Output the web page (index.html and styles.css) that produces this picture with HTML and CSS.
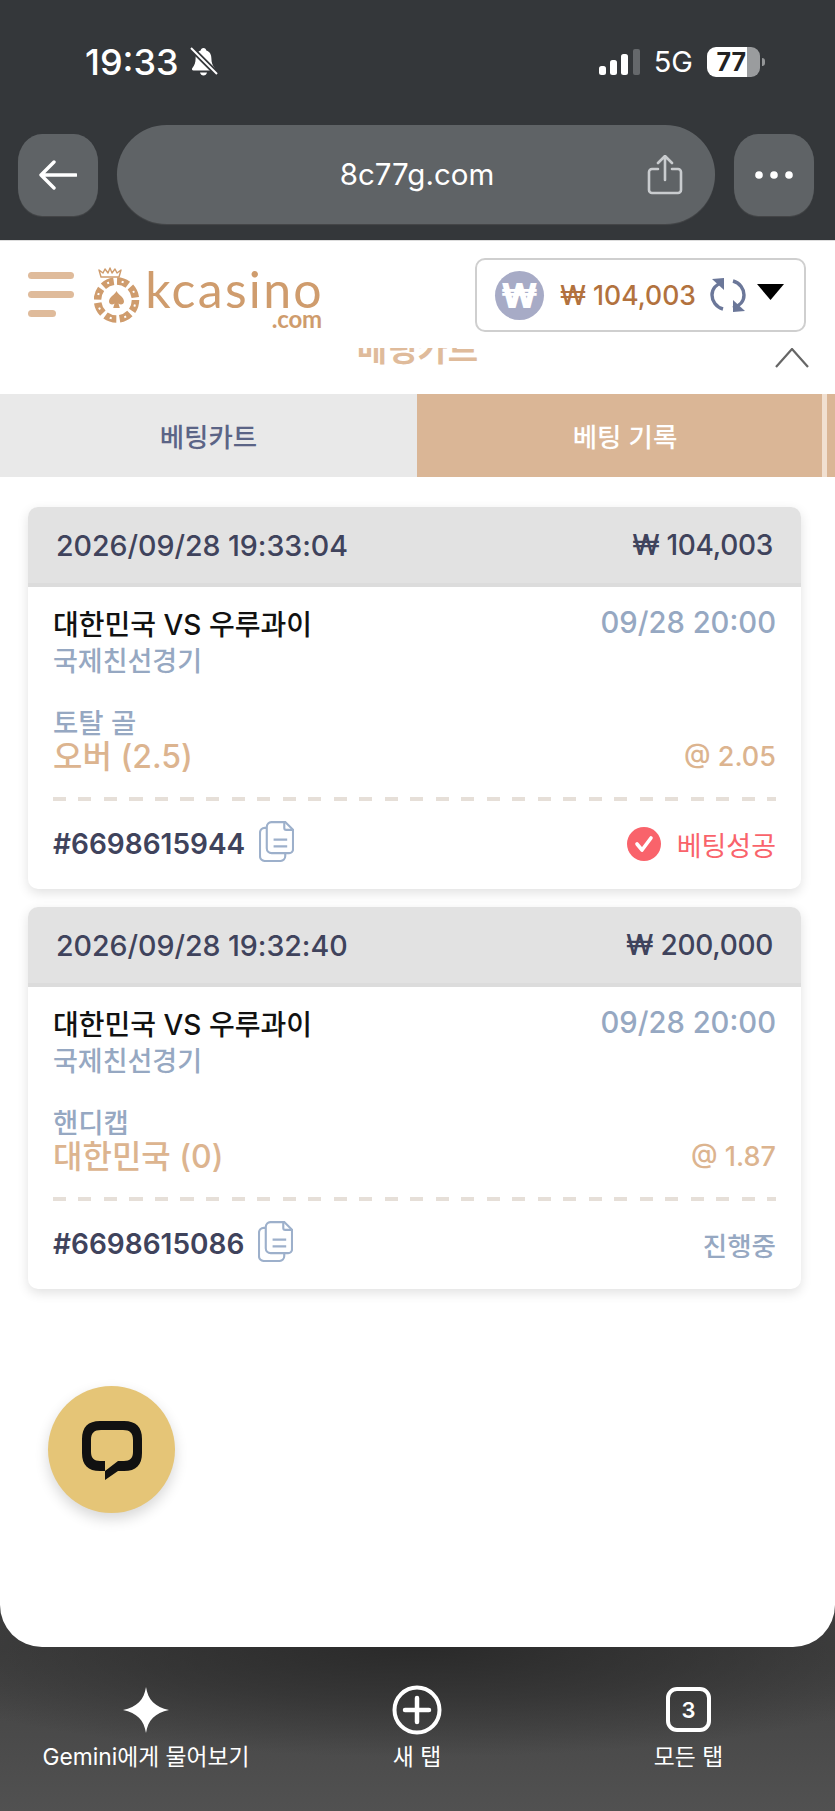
FILE: index.html
```html
<!DOCTYPE html>
<html lang="ko">
<head>
<meta charset="utf-8">
<title>kcasino</title>
<link rel="stylesheet" href="styles.css">
</head>
<body>
<div class="app">
  <div class="chrome">
    <div class="status">
      <div class="status-left">
        <span class="time">19:33</span>
        <svg class="bell" viewBox="0 0 29 30"><path d="M14.500 1c-1.600 0-2.600 1-2.800 2.400C8 4.600 6.600 7.600 6.600 11.500c0 4-1 6.500-3.400 9.700-.6.900-.1 2.300 1.200 2.300h20.200c1.300 0 1.800-1.400 1.200-2.300-2.400-3.200-3.400-5.700-3.400-9.700 0-3.900-1.400-6.900-5.100-8.100C17.100 2 16.100 1 14.500 1z" fill="#fff"/><path d="M11 25.500h7c-.4 2-1.800 3-3.500 3s-3.100-1-3.500-3z" fill="#fff"/><path d="M2 1l26 26" stroke="#34373a" stroke-width="5.500"/><path d="M2 1l26 26" stroke="#fff" stroke-width="2"/></svg>
      </div>
      <div class="status-right">
        <svg class="signal" viewBox="0 0 41 26"><rect x="0" y="17" width="7" height="9" rx="2.500" fill="#fff"/><rect x="11" y="11" width="7" height="15" rx="2.500" fill="#fff"/><rect x="22" y="5" width="7" height="21" rx="2.500" fill="#fff"/><rect x="34" y="0" width="7" height="26" rx="2" fill="#65686b"/></svg>
        <span class="net">5G</span>
        <span class="battery"><span class="battery-num">77</span></span>
        <span class="battery-nub"></span>
      </div>
    </div>
    <div class="nav">
      <div class="nav-btn">
        <svg class="back" viewBox="0 0 38 30"><path d="M37 15H3M15 2L2 15l13 13" fill="none" stroke="#fff" stroke-width="3.400" stroke-linecap="round" stroke-linejoin="round"/></svg>
      </div>
      <div class="url">
        <span class="url-text">8c77g.com</span>
        <svg class="share" viewBox="0 0 36 40"><path d="M11 14H5a3 3 0 0 0-3 3v18a3 3 0 0 0 3 3h26a3 3 0 0 0 3-3V17a3 3 0 0 0-3-3h-6" fill="none" stroke="#c9cccf" stroke-width="2.600" stroke-linecap="round"/><path d="M18 25V2M11 8l7-7 7 7" fill="none" stroke="#c9cccf" stroke-width="2.600" stroke-linecap="round" stroke-linejoin="round"/></svg>
      </div>
      <div class="nav-btn">
        <svg class="dots" viewBox="0 0 38 8"><circle cx="4" cy="4" r="3.800" fill="#fff"/><circle cx="19" cy="4" r="3.800" fill="#fff"/><circle cx="34" cy="4" r="3.800" fill="#fff"/></svg>
      </div>
    </div>
  </div>

  <div class="page">
    <header class="site-head">
      <div class="burger"><span class="bar"></span><span class="bar"></span><span class="bar bar-short"></span></div>
      <div class="logo">
        <svg class="chip" viewBox="0 0 46 56">
          <path d="M7 10L5 3l4 3 2-4 3 4 2-5 2 5 3-4 2 4 4-3-2 7z" fill="none" stroke="#cf9c6d" stroke-width="1.400" stroke-linejoin="round"/>
          <circle cx="22.500" cy="33" r="19" fill="none" stroke="#cf9c6d" stroke-width="7.500" stroke-dasharray="11.500 3.420"/>
          <circle cx="22.500" cy="33" r="19" fill="none" stroke="#fff" stroke-width="2" stroke-dasharray="2 12.920" stroke-dashoffset="-4.700"/>
          <path d="M22.500 24c2 4 7.500 6 7.500 10.500 0 3-3.500 4-5.500 2l1.300 4.500h-6.600l1.300-4.500c-2 2-5.500 1-5.500-2C15 30 20.500 28 22.500 24z" fill="#cf9c6d"/>
        </svg>
        <div class="wordmark"><span class="word">kcasino</span><span class="dotcom">.com</span></div>
      </div>
      <div class="wallet">
        <span class="coin">₩</span>
        <span class="balance">₩ 104,003</span>
        <svg class="refresh" viewBox="0 0 36 34"><path d="M13 4C6 6 2 11 2 17c0 6 4 12 11 14" fill="none" stroke="#6b7799" stroke-width="3.400"/><path d="M2 1l12-1v12z" fill="#6b7799"/><path d="M23 3c7 2 11 8 11 14 0 6-4 11-11 13" fill="none" stroke="#6b7799" stroke-width="3.400"/><path d="M35 33l-12 1V22z" fill="#6b7799"/></svg>
        <svg class="caret" viewBox="0 0 27 16"><path d="M0 0h27L13.500 16z" fill="#000"/></svg>
      </div>
    </header>
    <div class="cart-title">
      <span class="cart-title-text">베팅카트</span>
      <svg class="chev" viewBox="0 0 34 20"><path d="M1 19L17 1l16 18" fill="none" stroke="#666" stroke-width="2.200"/></svg>
    </div>
    <div class="tabs">
      <div class="tab tab-off">베팅카트</div>
      <div class="tab tab-on">베팅 기록</div>
      <div class="tab-sep"></div>
      <div class="tab-rest"></div>
    </div>

    <div class="list">
      <article class="card">
        <div class="card-head"><span class="stamp">2026/09/28 19:33:04</span><span class="stake">₩ 104,003</span></div>
        <div class="card-body">
          <div class="row">
            <div><div class="match">대한민국 VS 우루과이</div><div class="league">국제친선경기</div></div>
            <div class="kick">09/28 20:00</div>
          </div>
          <div class="market">토탈 골</div>
          <div class="row row-end">
            <div class="pick">오버 (2.5)</div>
            <div class="odds">@ 2.05</div>
          </div>
          <div class="dash"></div>
          <div class="row row-mid foot">
            <div class="ticket">#6698615944
              <svg class="copy" viewBox="0 0 36 42"><path d="M8 7H6a5 5 0 0 0-5 5v24a5 5 0 0 0 5 5h16a5 5 0 0 0 5-5v-3" fill="none" stroke="#9db0cb" stroke-width="2.200"/><path d="M13 1h14l8 8v20a4 4 0 0 1-4 4H13a5 5 0 0 1-5-5V6a5 5 0 0 1 5-5z" fill="none" stroke="#9db0cb" stroke-width="2.200"/><path d="M26 1v6a2 2 0 0 0 2 2h7" fill="none" stroke="#9db0cb" stroke-width="2.200"/><path d="M15 19h14M15 26h14" stroke="#9db0cb" stroke-width="2.200"/></svg>
            </div>
            <div class="state state-ok">
              <svg class="okmark" viewBox="0 0 34 34"><circle cx="17" cy="17" r="17" fill="#f9636b"/><path d="M10 17l5 6 9-12" fill="none" stroke="#fff" stroke-width="3.600" stroke-linecap="round" stroke-linejoin="round"/></svg>
              베팅성공
            </div>
          </div>
        </div>
      </article>

      <article class="card">
        <div class="card-head"><span class="stamp">2026/09/28 19:32:40</span><span class="stake">₩ 200,000</span></div>
        <div class="card-body">
          <div class="row">
            <div><div class="match">대한민국 VS 우루과이</div><div class="league">국제친선경기</div></div>
            <div class="kick">09/28 20:00</div>
          </div>
          <div class="market">핸디캡</div>
          <div class="row row-end">
            <div class="pick">대한민국 (0)</div>
            <div class="odds">@ 1.87</div>
          </div>
          <div class="dash"></div>
          <div class="row row-mid foot">
            <div class="ticket">#6698615086
              <svg class="copy" viewBox="0 0 36 42"><path d="M8 7H6a5 5 0 0 0-5 5v24a5 5 0 0 0 5 5h16a5 5 0 0 0 5-5v-3" fill="none" stroke="#9db0cb" stroke-width="2.200"/><path d="M13 1h14l8 8v20a4 4 0 0 1-4 4H13a5 5 0 0 1-5-5V6a5 5 0 0 1 5-5z" fill="none" stroke="#9db0cb" stroke-width="2.200"/><path d="M26 1v6a2 2 0 0 0 2 2h7" fill="none" stroke="#9db0cb" stroke-width="2.200"/><path d="M15 19h14M15 26h14" stroke="#9db0cb" stroke-width="2.200"/></svg>
            </div>
            <div class="state state-wait">진행중</div>
          </div>
        </div>
      </article>
    </div>

    <button class="chat" type="button" aria-label="chat">
      <svg class="chat-icon" viewBox="0 0 60 60"><path fill="#111" fill-rule="evenodd" d="M18 0H42C54 0 60 6 60 18V32C60 44 54 50 42 50H36L23 59V50H18C6 50 0 44 0 32V18C0 6 6 0 18 0ZM19 9C12 9 9 12 9 19V31C9 37 12 40 18 40H23V50L36 40H42C48 40 51 37 51 31V19C51 12 48 9 41 9Z"/></svg>
    </button>
  </div>

  <nav class="dock">
    <div class="dock-item">
      <svg class="dock-icon" viewBox="0 0 50 50"><path d="M25 2c2 13 9 20 23 23-14 3-21 10-23 23C23 35 16 28 2 25 16 22 23 15 25 2z" fill="#fff"/></svg>
      <span class="dock-label">Gemini에게 물어보기</span>
    </div>
    <div class="dock-item">
      <svg class="dock-icon" viewBox="0 0 50 50"><circle cx="25" cy="25" r="22.500" fill="none" stroke="#fff" stroke-width="4"/><path d="M25 13v24M13 25h24" stroke="#fff" stroke-width="4.500" stroke-linecap="round"/></svg>
      <span class="dock-label">새 탭</span>
    </div>
    <div class="dock-item">
      <span class="tabs-count">3</span>
      <span class="dock-label">모든 탭</span>
    </div>
  </nav>
</div>
</body>
</html>
```
FILE: styles.css
```css
* { box-sizing: border-box; }
html, body { margin: 0; padding: 0; }
body { font-family: Inter, "Noto Sans CJK KR", "Noto Sans", sans-serif; background: #fff; }
.app { width: 835px; height: 1811px; overflow: hidden; background: #3d3d3d; display: flex; flex-direction: column; }

.chrome { height: 240px; flex: none; background: #34373a; }
.status { height: 125px; padding: 47px 70px 0 85px; display: flex; justify-content: space-between; align-items: flex-start; color: #fff; }
.status-left { display: flex; align-items: center; gap: 10px; height: 30px; }
.time { font-size: 36px; font-weight: 500; line-height: 30px; letter-spacing: 0; }
.bell { width: 29px; height: 30px; }
.status-right { display: flex; align-items: center; height: 30px; }
.signal { width: 41px; height: 26px; margin-right: 14px; }
.net { font-size: 29px; font-weight: 400; margin-right: 14px; line-height: 30px; }
.battery { width: 53px; height: 30px; border-radius: 9px; background: linear-gradient(90deg, #fff 0 76%, #9a9c9e 76%); display: block; }
.battery-num { display: block; width: 40px; padding-right: 1px; text-align: right; font-size: 25px; font-weight: 700; line-height: 30px; color: #222; }
.battery-nub { width: 3px; height: 8px; background: #949698; border-radius: 0 4px 4px 0; margin-left: 2px; }

.nav { height: 99px; padding: 0 20px 0 18px; display: flex; align-items: center; gap: 19px; }
.nav-btn { width: 80px; height: 82px; border-radius: 24px / 28px; background: #5f6366; display: flex; align-items: center; justify-content: center; box-shadow: 0 1px 1px #46484a; flex: none; }
.back { width: 38px; height: 30px; }
.dots { width: 38px; height: 8px; }
.url { width: 598px; height: 99px; flex: none; border-radius: 50px; background: #5f6366; box-shadow: 0 1px 1px #46484a; position: relative; display: flex; align-items: center; justify-content: center; }
.url-text { color: #fff; font-size: 29.500px; line-height: 34px; margin-left: 2px; margin-top: -2px; }
.share { position: absolute; left: 530px; top: 30px; width: 36px; height: 40px; }

.page { height: 1407px; flex: none; background: #fff; border-radius: 0 0 42px 42px; position: relative; z-index: 1; overflow: hidden; }
.site-head { height: 108px; display: flex; align-items: flex-start; padding: 17px 29px 0 28px; border-top: 1px solid #ddd; position: relative; z-index: 2; background: #fff; }
.burger { width: 46px; display: flex; flex-direction: column; gap: 12px; padding-top: 14px; flex: none; }
.bar { display: block; height: 7px; border-radius: 4px; background: #dfbb9b; }
.bar-short { width: 28px; }
.logo { width: 226px; margin-left: 20px; height: 72px; display: flex; align-items: flex-start; flex: none; margin-top: 9px; }
.chip { width: 46px; height: 56px; flex: none; }
.wordmark { display: flex; flex-direction: column; align-items: flex-end; margin-left: 10px; width: 172px; color: #cf9c6d; font-family: Lato, sans-serif; }
.word { font-size: 50px; line-height: 44px; font-weight: 400; letter-spacing: 2.300px; margin-right: -2px; white-space: nowrap; }
.dotcom { font-size: 24px; line-height: 20px; font-weight: 700; margin-top: -2px; letter-spacing: -.2px; }
.wallet { margin-left: auto; width: 331px; height: 74px; border: 2px solid #cfcfcf; border-radius: 10px; display: flex; align-items: center; padding: 0 20px 0 18px; background: #fff; flex: none; }
.coin { width: 49px; height: 49px; border-radius: 50%; background: #a7abc6; color: #fff; font-size: 34px; font-weight: 900; line-height: 49px; text-align: center; flex: none; }
.balance { color: #b2723e; font-size: 26.500px; font-weight: 500; margin-left: 16px; white-space: nowrap; line-height: 34px; }
.refresh { width: 36px; height: 34px; margin-left: 14px; flex: none; }
.caret { width: 27px; height: 16px; margin-left: 11px; margin-top: -6px; flex: none; }

.cart-title { height: 46px; overflow: hidden; position: relative; display: flex; justify-content: center; align-items: flex-end; padding-bottom: 27px; }
.cart-title-text { color: #dfbb9b; font-size: 33px; font-weight: 700; line-height: 36px; }
.chev { position: absolute; left: 775px; top: 0; width: 34px; height: 20px; }

.tabs { height: 83px; display: flex; }
.tab { display: flex; align-items: center; justify-content: center; font-size: 26.500px; font-weight: 500; }
.tab-off { width: 417px; background: #e9e9e9; color: #5b6486; }
.tab-on { width: 405px; background: #dab696; color: #fff; padding-left: 11px; }
.tab-sep { width: 5px; background: #f1e0d1; }
.tab-rest { flex: 1; background: #dab696; }

.list { padding: 30px 34px 0 28px; display: flex; flex-direction: column; gap: 18px; }
.card { height: 382px; border-radius: 10px; background: #fff; box-shadow: 0 4px 12px rgba(0,0,0,.12); overflow: hidden; }
.card-head { height: 80px; background: #e2e2e2; border-bottom: 4px solid #dcdcdc; padding: 0 28px; display: flex; justify-content: space-between; align-items: center; color: #3f435c; font-weight: 500; }
.stamp { font-size: 28.600px; letter-spacing: -.05px; }
.stake { font-size: 28px; letter-spacing: -.3px; }
.card-body { padding: 19px 25px 0; }
.row { display: flex; justify-content: space-between; align-items: flex-start; }
.row-end { align-items: center; }
.row-mid { align-items: center; }
.match { color: #111; font-size: 28px; font-weight: 500; line-height: 38px; }
.league { color: #96a8c2; font-size: 27px; font-weight: 500; line-height: 36px; }
.kick { color: #96a8c2; font-size: 29.200px; font-weight: 500; line-height: 34px; }
.market { color: #96a8c2; font-size: 27.500px; font-weight: 500; line-height: 34px; margin-top: 26px; }
.pick { color: #dcb48f; font-size: 32px; font-weight: 500; line-height: 34px; }
.odds { color: #dcb48f; font-size: 27px; font-weight: 500; line-height: 34px; }
.dash { height: 4px; margin-top: 23px; background: repeating-linear-gradient(90deg, #e6dfd8 0 13px, transparent 13px 25.500px); }
.foot { margin-top: 21px; height: 44px; }
.ticket { display: flex; align-items: center; gap: 14px; color: #3f435c; font-size: 28px; font-weight: 600; }
.copy { width: 35px; height: 41px; margin-top: -6px; }
.state { display: flex; align-items: center; font-size: 27px; font-weight: 400; }
.state-ok { color: #f9636b; gap: 16px; }
.state-wait { color: #96a8c2; font-weight: 500; font-size: 26.500px; }
.okmark { width: 34px; height: 34px; }

.chat { position: absolute; left: 48px; top: 1146px; width: 127px; height: 127px; border-radius: 50%; border: 0; padding: 0; background: #e5c577; box-shadow: 0 6px 14px rgba(0,0,0,.16); display: flex; align-items: center; justify-content: center; }
.chat-icon { width: 60px; height: 60px; margin: 3px 0 0 1px; }

.dock { height: 204px; margin-top: -40px; padding: 78px 0 0; flex: none; background: radial-gradient(ellipse 560px 110px at 50% 40px, #2a2a2a 0%, rgba(42,42,42,.55) 50%, rgba(42,42,42,0) 100%), linear-gradient(180deg, #424242 20%, #515151 100%); display: grid; grid-template-columns: 292px 250px 293px; justify-items: center; color: #fff; }
.dock-item { display: flex; flex-direction: column; align-items: center; height: 90px; }
.dock-icon { width: 50px; height: 50px; }
.tabs-count { width: 45px; height: 45px; margin: 2px 0 3px; border: 4px solid #fff; border-radius: 11px; display: flex; align-items: center; justify-content: center; font-size: 22px; font-weight: 600; }
.dock-label { font-size: 22.800px; line-height: 30px; margin-top: 7px; white-space: nowrap; }
```
